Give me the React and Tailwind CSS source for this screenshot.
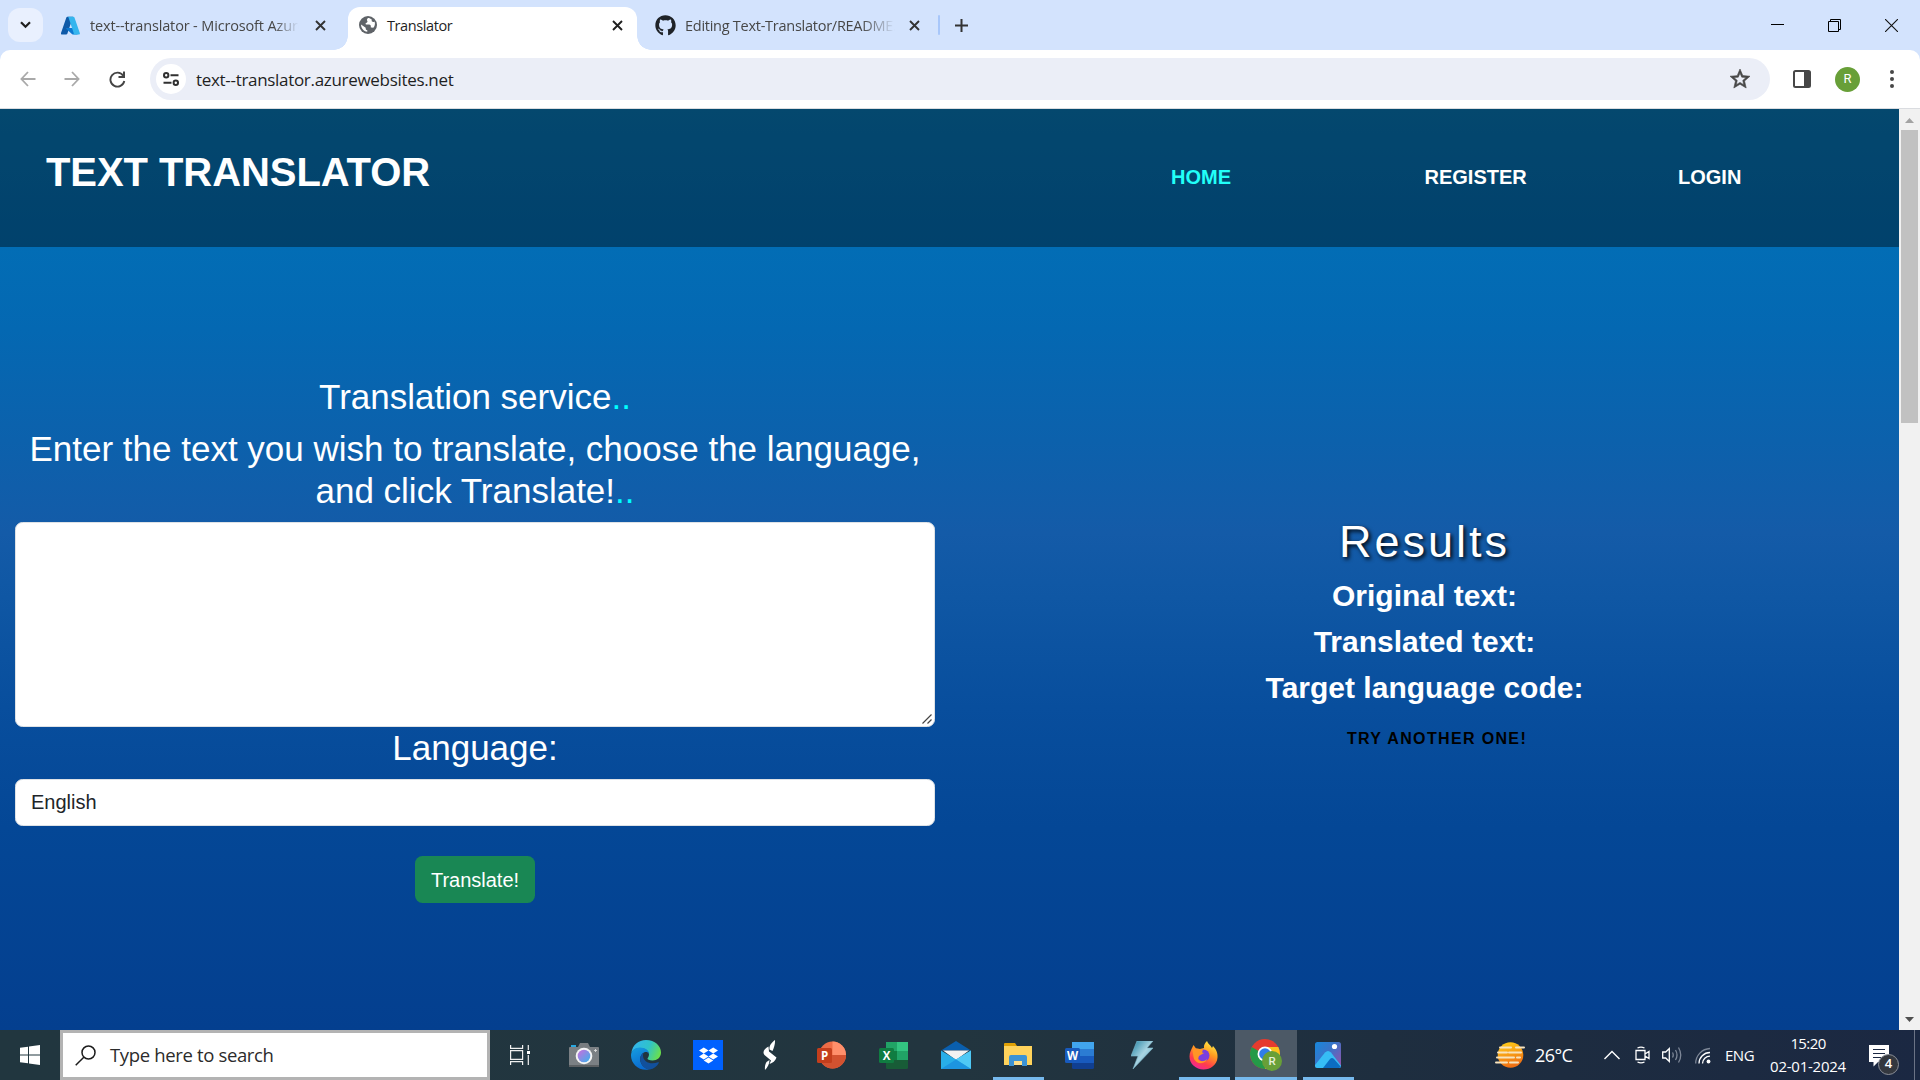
import React from "react";
import { FaGithub, FaDropbox } from "react-icons/fa";
import { MdStarOutline } from "react-icons/md";

const ui = "font-['Open_Sans','Noto_Sans',sans-serif]";

function CloseX({ color }) {
  return (
    <svg className="h-[11px] w-[11px] shrink-0" viewBox="0 0 11 11">
      <path d="M1 1l9 9M10 1l-9 9" stroke={color} strokeWidth="1.9" fill="none" />
    </svg>
  );
}

function AzureIcon() {
  return (
    <svg className="h-[19px] w-[19px] shrink-0" viewBox="0 0 96 96">
      <path fill="#0f5aa8" d="M33 4h28L32 90c-1 3-3 4-6 4H5c-4 0-7-4-5-8L27 8c1-3 3-4 6-4z" />
      <path fill="#0b78d1" d="M72 60H28c-2 0-3 2-2 4l29 27c1 1 2 3 4 3h25z" />
      <path fill="#35b5ee" d="M68 8c-1-3-3-4-6-4H32c3 0 5 1 6 4l26 78c2 4-1 8-5 8h31c4 0 7-4 5-8z" />
    </svg>
  );
}

function GlobeIcon() {
  return (
    <svg className="h-[18px] w-[18px] shrink-0" viewBox="0 0 18 18">
      <circle cx="9" cy="9" r="9" fill="#5f6368" />
      <path fill="#fff" d="M9 2c-1 1-1.400 1.900-.8 2.800.7 1 .2 1.700-1 2.200-.9.300-.8 1.200 0 1.500h3c1 0 1.600.8 1.600 1.700v1.300c.9 0 1.600-.2 2.200.5 1.800-1.700 2.500-4.300 1.500-6.600-.6.700-1.600.8-2.400.2-.6-.5-.5-1.400-.2-1.900C11.600 2.600 10.400 2 9 2zM2 8.500c0 3.500 2.600 6.800 6.300 7.300v-1.600c-1-.1-1.600-.8-1.600-1.700v-.8z" />
    </svg>
  );
}

function TabStrip() {
  return (
    <div className={`flex h-[50px] w-full items-center bg-[#d3e3fd] text-[14.5px] tracking-[-0.4px] ${ui}`}>
      <button className="ml-2 flex h-[34px] w-[35px] items-center justify-center rounded-[12px] bg-[#e9f0fe]">
        <svg className="h-[8px] w-[11px]" viewBox="0 0 11 8">
          <path d="M1 1.200l4.500 4.600L10 1.200" fill="none" stroke="#1f1f1f" strokeWidth="2.200" />
        </svg>
      </button>
      <div className="ml-[18px] flex w-[265px] items-center">
        <AzureIcon />
        <span className="ml-[10px] w-[209px] overflow-hidden whitespace-nowrap pt-px tracking-[-0.150px] text-[#474747] [mask-image:linear-gradient(to_right,black_88%,transparent)]">
          text--translator - Microsoft Azure
        </span>
        <span className="ml-[16px] flex"><CloseX color="#333" /></span>
      </div>
      <div className="relative ml-[22px] mt-[7px] flex h-[43px] w-[289px] items-center self-start rounded-t-[12px] bg-white pl-[11px] pb-[7px]">
        <div className="absolute -left-[14px] bottom-0 h-[14px] w-[14px] bg-[radial-gradient(circle_at_0_0,transparent_13.500px,white_14px)]" />
        <div className="absolute -right-[14px] bottom-0 h-[14px] w-[14px] bg-[radial-gradient(circle_at_100%_0,transparent_13.500px,white_14px)]" />
        <GlobeIcon />
        <span className="ml-[10px] pt-px text-[#1f1f1f]">Translator</span>
        <span className="ml-auto mr-[14px]"><CloseX color="#1f1f1f" /></span>
      </div>
      <div className="ml-[18px] flex items-center">
        <FaGithub className="h-[21px] w-[21px] text-[#1f2328]" />
        <span className="ml-[9px] w-[210px] overflow-hidden whitespace-nowrap pt-px tracking-[-0.260px] text-[#474747] [mask-image:linear-gradient(to_right,black_84%,transparent)]">
          Editing Text-Translator/README.md
        </span>
        <span className="ml-[14px]"><CloseX color="#333" /></span>
      </div>
      <div className="ml-[18px] h-[20px] w-[2px] rounded bg-[#a8c7fa]" />
      <svg className="ml-[15px] h-[13px] w-[13px]" viewBox="0 0 13 13">
        <path d="M6.500 0v13M0 6.500h13" stroke="#333" strokeWidth="2" />
      </svg>
      <div className="ml-auto mr-[22px] flex items-center gap-[44px]">
        <svg className="h-[13px] w-[13px]" viewBox="0 0 13 13"><path d="M0 5.500h13" stroke="#000" strokeWidth="1" /></svg>
        <svg className="h-[13px] w-[13px]" viewBox="0 0 13 13">
          <path d="M.5 2.500h10v10H.5zM2.500 2.500v-2h10v10h-2" stroke="#000" fill="none" />
        </svg>
        <svg className="h-[13px] w-[13px]" viewBox="0 0 13 13"><path d="M0 0l13 13M13 0L0 13" stroke="#111" strokeWidth="1.100" /></svg>
      </div>
    </div>
  );
}

function Toolbar() {
  return (
    <div className="bg-[#d3e3fd]">
      <div className={`flex h-[59px] w-full items-center rounded-t-[10px] border-b border-[#dadce0] bg-white ${ui}`}>
        <svg className="ml-[20px] h-[16px] w-[16px]" viewBox="0 0 16 16">
          <path d="M15.500 8H2M8 1L1.400 8 8 15" fill="none" stroke="#a9a9a9" strokeWidth="1.800" />
        </svg>
        <svg className="ml-[28px] h-[16px] w-[16px]" viewBox="0 0 16 16">
          <path d="M.5 8H14M8 1l6.600 7L8 15" fill="none" stroke="#a9a9a9" strokeWidth="1.800" />
        </svg>
        <svg className="ml-[29px] h-[17px] w-[17px]" viewBox="0 0 17 17">
          <path d="M14.200 4.600A7 7 0 1 0 15.300 10" fill="none" stroke="#444" strokeWidth="1.900" />
          <path d="M16 .5V7H9.500V5H14V.5z" fill="#444" />
        </svg>
        <div className="ml-[24px] flex h-[42px] w-[1620px] items-center rounded-full bg-[#ebeef7]">
          <div className="ml-[6px] flex h-[30px] w-[30px] items-center justify-center rounded-full bg-white">
            <svg className="h-[14px] w-[16px]" viewBox="0 0 16 14">
              <g fill="none" stroke="#303030" strokeWidth="2">
                <circle cx="3.200" cy="3.200" r="2.200" />
                <path d="M7.500 3.200H15.500M.5 10.800H8.500" />
                <circle cx="12.800" cy="10.800" r="2.200" />
              </g>
            </svg>
          </div>
          <span className="ml-[10px] whitespace-nowrap pt-[2px] text-[17px] tracking-[-0.310px] text-[#1f1f1f]">text--translator.azurewebsites.net</span>
          <MdStarOutline className="ml-auto mr-[18px] h-[24px] w-[24px] stroke-[#474747] stroke-[0.600] text-[#474747]" />
        </div>
        <svg className="ml-[23px] h-[18px] w-[18px]" viewBox="0 0 18 18">
          <rect x="1" y="1" width="16" height="16" rx="1.500" fill="none" stroke="#474747" strokeWidth="2" />
          <path d="M11 1h6v16h-6z" fill="#474747" />
        </svg>
        <div className="ml-[24px] flex h-[25px] w-[25px] items-center justify-center rounded-full bg-[#689f38] font-[Roboto,sans-serif] text-[13px] text-white">R</div>
        <svg className="ml-[30px] h-[18px] w-[4px]" viewBox="0 0 4 18" fill="#474747">
          <circle cx="2" cy="2" r="2" /><circle cx="2" cy="9" r="2" /><circle cx="2" cy="16" r="2" />
        </svg>
      </div>
    </div>
  );
}

function SiteHeader() {
  return (
    <header className="flex h-[138px] items-start bg-black/40 font-bold">
      <h1 className="ml-[46px] mt-[39px] whitespace-nowrap text-[40px] leading-[48px] tracking-[-0.070px] text-white">TEXT TRANSLATOR</h1>
      <nav className="ml-auto mt-[53px] flex text-[20px] leading-[30px] text-white">
        <a className="w-[253.500px] text-[#22fff8]">HOME</a>
        <a className="w-[253.500px]">REGISTER</a>
        <a className="w-[221px]">LOGIN</a>
      </nav>
    </header>
  );
}

function TranslatorPage() {
  return (
    <div className="flex h-[921px] w-[1899px] flex-col bg-[linear-gradient(to_bottom,#0778b8_0%,#026db5_15%,#0468b2_24%,#0c61ac_36%,#145ba8_46%,#0f57a4_53%,#084e9d_65%,#044796_78%,#043f8f_100%)] font-['Liberation_Sans',Arial,sans-serif]">
      <SiteHeader />
      <main className="flex flex-1">
        <section className="flex w-[950px] flex-col items-center px-[15px] pt-[129px] text-white">
          <h2 className="mb-[10px] text-[35px] leading-[42px]">Translation service<span className="text-[#00ffff]">..</span></h2>
          <h2 className="mb-[10px] text-center text-[35px] leading-[42px]">
            Enter the text you wish to translate, choose the language,<br />and click Translate!<span className="text-[#00ffff]">..</span>
          </h2>
          <div className="flex h-[205px] w-[920px] items-end justify-end rounded-[7.500px] border border-[#dee2e6] bg-white p-[2px]">
            <svg className="h-[10px] w-[10px]" viewBox="0 0 10 10"><path d="M.5 9.500l9-9M5.500 9.500l4-4" stroke="#444" strokeWidth="1.200" /></svg>
          </div>
          <h2 className="mb-[10px] text-[35px] leading-[42px]">Language:</h2>
          <div className="flex h-[47px] w-[920px] items-center rounded-[7.500px] border border-[#dee2e6] bg-white pb-[2px] pl-[15px] text-[20px] leading-[30px] text-[#212529]">English</div>
          <button className="mt-[30px] h-[47px] w-[120px] whitespace-nowrap rounded-[7.500px] bg-[#198754] text-[20px] leading-[30px]">Translate!</button>
        </section>
        <section className="flex flex-1 flex-col items-center pt-[268px] text-white">
          <h2 className="mb-[9px] text-[45px] leading-[54px] tracking-[3px] [text-shadow:2px_2px_4px_#000]">Results</h2>
          <h3 className="mb-[10px] text-[30px] font-bold leading-[36px]">Original text:</h3>
          <h3 className="mb-[10px] text-[30px] font-bold leading-[36px]">Translated text:</h3>
          <h3 className="text-[30px] font-bold leading-[36px]">Target language code:</h3>
          <a className="mt-[21px] pl-[25px] text-[16px] font-bold leading-[24px] tracking-[1.350px] text-black">TRY ANOTHER ONE!</a>
        </section>
      </main>
    </div>
  );
}

function Scrollbar() {
  return (
    <div className="flex w-[21px] flex-col items-center bg-[#f1f1f1]">
      <svg className="mt-[9px] h-[5px] w-[9px]" viewBox="0 0 9 5"><path d="M0 5L4.500 0 9 5z" fill="#a3a3a3" /></svg>
      <div className="mt-[7px] h-[293px] w-[17px] bg-[#c1c1c1]" />
      <svg className="mb-[8px] mt-auto h-[5px] w-[9px]" viewBox="0 0 9 5"><path d="M0 0L4.500 5 9 0z" fill="#505050" /></svg>
    </div>
  );
}

const CameraIcon = () => (
  <svg className="h-[30px] w-[30px]" viewBox="0 0 30 30">
    <defs><linearGradient id="lens" x1="0" y1="0" x2="1" y2="1"><stop offset=".2" stopColor="#b07ae0" /><stop offset="1" stopColor="#35b4ee" /></linearGradient></defs>
    <path d="M2 5h5v3H2z" fill="#28a8e0" />
    <path d="M9 7l2-4h8l2 4z" fill="#777c80" />
    <rect y="7" width="30" height="20" rx="1" fill="#7b8084" />
    <path d="M0 25h30v2H0z" fill="#5c6063" />
    <circle cx="15" cy="16" r="8.300" fill="#f4f4f4" />
    <circle cx="15" cy="16" r="6.300" fill="url(#lens)" />
    <path d="M26.500 9v3M25 10.500h3" stroke="#ddd" strokeWidth=".9" />
  </svg>
);

const EdgeIcon = () => (
  <svg className="h-[30px] w-[30px]" viewBox="0 0 30 30">
    <defs>
      <linearGradient id="edgeTop" x1="0" y1=".3" x2="1" y2=".6"><stop stopColor="#33b4ef" /><stop offset=".55" stopColor="#2fc3c9" /><stop offset="1" stopColor="#6be04a" /></linearGradient>
      <linearGradient id="edgeLeft" x1="0" y1="0" x2=".4" y2="1"><stop stopColor="#169fe0" /><stop offset="1" stopColor="#0a6ad0" /></linearGradient>
    </defs>
    <path d="M.3 13C1.500 5 7.500 0 15 0c9 0 15 6 15 12.500 0 5-4 8-8.500 8-3.500 0-5-1.200-5-2 0-.6 1.500-1.600 1.500-4 0-4-4.500-6.500-9-6.500-4 0-7.500 2-8.700 5z" fill="url(#edgeTop)" />
    <path d="M0 15.500C0 10.500 4 7.500 9 7.500c4.500 0 9 2.800 9 6.500-1-2-3-2.500-5-1.500-3 1.500-4.500 5-3.500 9 1 4 5 7.500 9 8C8 31.500 0 24 0 15.500z" fill="url(#edgeLeft)" />
    <path d="M12.500 12.700C9 15 8.500 19 10 23c1.500 4 5 6.500 8.800 6.500 4-.7 7-3 9-6.500.4-.7-.2-1-.8-.8-7 3-15-.2-15-6.700 0-1 .2-2 .5-2.800z" fill="#12509c" />
  </svg>
);

const DropboxIcon = () => (
  <div className="flex h-[30px] w-[30px] items-center justify-center bg-[#0061ff]">
    <FaDropbox className="h-[19px] w-[19px] text-white" />
  </div>
);

const SwiftIcon = () => (
  <svg className="h-[30px] w-[14px]" viewBox="0 0 14 30">
    <path fill="#fff" d="M12 0C9 2.500 6 5 6.500 9.500L9.500 11C11 7.500 12.300 4 12 0zM5.500 6.500C1.500 8.500-1 12 1.500 15L8 20.500 6.500 24c3-1 6-3 7-6.500L6 11.500zM2 30c-.3-3 0-5.500 1.500-8L6.500 20c0 4-2 7.500-4.500 10z" />
  </svg>
);

const OfficeTile = ({ fill, letter }) => (
  <g>
    <rect x="0" y="7" width="15" height="15" rx="1.500" fill={fill} />
    <text x="7.500" y="18.500" textAnchor="middle" fill="#fff" fontSize="11.500" fontWeight="700" fontFamily="Open Sans, sans-serif">{letter}</text>
  </g>
);

const PowerPointIcon = () => (
  <svg className="mr-[2px] h-[28px] w-[29px]" viewBox="0 0 29 28">
    <circle cx="15.500" cy="14" r="13.500" fill="#ed6c47" />
    <path d="M15.500.5A13.500 13.500 0 0 1 29 14H15.500z" fill="#ff8f6b" />
    <path d="M2 14h27a13.500 13.500 0 0 1-27 0z" fill="#d35230" />
    <OfficeTile fill="#c43e1c" letter="P" />
  </svg>
);

const ExcelIcon = () => (
  <svg className="mr-[2px] h-[28px] w-[29px]" viewBox="0 0 29 28">
    <rect x="7" y="1" width="22" height="27" rx="1.500" fill="#185c37" />
    <path d="M7 1h11v9H7z" fill="#21a366" /><path d="M18 1h11v9H18z" fill="#33c481" />
    <path d="M7 10h11v9H7z" fill="#107c41" /><path d="M18 10h11v9H18z" fill="#21a366" />
    <OfficeTile fill="#107c41" letter="X" />
  </svg>
);

const WordIcon = () => (
  <svg className="mr-[2px] h-[28px] w-[29px]" viewBox="0 0 29 28">
    <rect x="7" y="1" width="22" height="27" rx="1.500" fill="#103f91" />
    <path d="M7 1h22v7H7z" fill="#41a5ee" /><path d="M7 8h22v7H7z" fill="#2b7cd3" /><path d="M7 15h22v7H7z" fill="#185abd" />
    <OfficeTile fill="#185abd" letter="W" />
  </svg>
);

const MailIcon = () => (
  <svg className="h-[28px] w-[30px]" viewBox="0 0 30 28">
    <path d="M0 9.500L15 0l15 9.500z" fill="#0a5fae" />
    <path d="M2 9.500h26L15 19z" fill="#f2f2f2" />
    <path d="M0 9.500l15 9 15-9V28H0z" fill="#28aee8" />
    <path d="M30 9.500L15 18.500 30 28z" fill="#4fc9f5" />
    <path d="M0 28l15-9.500L30 28z" fill="#1d95e0" />
  </svg>
);

const FolderIcon = () => (
  <svg className="h-[26px] w-[28px]" viewBox="0 0 28 26">
    <path d="M0 1.500Q0 1 1 1h10l2 3v6H0z" fill="#e0a106" />
    <path d="M0 4h28v19H0z" fill="#ffd35c" />
    <path d="M5 24V15q0-2 2-2h14q2 0 2 2v9h-5v-5h-8v5z" fill="#3c93d4" />
    <path d="M10 19h8v4h-8z" fill="#ffe08a" />
  </svg>
);

const BoltIcon = () => (
  <svg className="h-[28px] w-[23px]" viewBox="0 0 23 28">
    <defs><linearGradient id="bolt" x1="0" y1="0" x2="1" y2="1"><stop stopColor="#1d7fa0" /><stop offset=".5" stopColor="#a9d4e2" /><stop offset="1" stopColor="#4a9fbd" /></linearGradient></defs>
    <path d="M6 0h16l-6 7h6L2 28l5-13H0z" fill="url(#bolt)" stroke="#7fb9cc" strokeWidth=".6" />
  </svg>
);

const FirefoxIcon = () => (
  <svg className="mr-[2px] h-[29px] w-[29px]" viewBox="0 0 29 29">
    <defs><linearGradient id="fox" x1=".8" y1="0" x2=".3" y2="1"><stop stopColor="#fff24a" /><stop offset=".4" stopColor="#ff9a1f" /><stop offset=".75" stopColor="#ff3c4c" /><stop offset="1" stopColor="#f0259a" /></linearGradient></defs>
    <path d="M4.500 4L7 7.500 11 8l4-1C14.500 4 16 2 18 0c1 3 3.500 4 5 7l1-2c3 3 5 7 4.500 11.500C28 24 21.500 28.500 14.500 28.500 7 28.500.5 23 .5 15.500.5 11 2.500 8.500 3 7z" fill="url(#fox)" />
    <circle cx="14.500" cy="14.500" r="6" fill="#7a3fe0" />
    <path d="M3 7l4 .5 7 1-1 3 2 .5-5 3-1 3c2 3 6 3 9 0-1 5-10 6-13 0C4 15 4 11 3 7z" fill="#ff9526" />
  </svg>
);

const ChromeIcon = () => (
  <svg className="h-[32px] w-[32px]" viewBox="0 0 32 32">
    <circle cx="15" cy="15" r="15" fill="#e63b2e" />
    <path d="M15 8h13.300A15 15 0 0 1 15 30z" fill="#fcc31e" />
    <path d="M1.700 8A15 15 0 0 0 15 30l6-11z" fill="#249a48" />
    <circle cx="15" cy="15" r="7.500" fill="#fff" />
    <circle cx="15" cy="15" r="5.800" fill="#2f7de9" />
    <circle cx="22" cy="22" r="10" fill="#689f38" />
    <text x="22" y="26.200" textAnchor="middle" fontSize="11.500" fill="#e6efd9" fontFamily="Roboto, sans-serif" fontWeight="500">R</text>
  </svg>
);

const PhotosIcon = () => (
  <svg className="h-[26px] w-[26px]" viewBox="0 0 26 26">
    <defs>
      <linearGradient id="sky" x1="0" y1="0" x2="1" y2=".8"><stop stopColor="#1688dd" /><stop offset=".5" stopColor="#3b73c8" /><stop offset="1" stopColor="#8b56ae" /></linearGradient>
      <clipPath id="photo"><rect width="26" height="26" rx="2.500" /></clipPath>
    </defs>
    <g clipPath="url(#photo)">
      <path d="M0 0h26v26H0z" fill="url(#sky)" />
      <path d="M0 23l10-12.500q3-3 6 0L28 26H0z" fill="#36bdf5" />
      <path d="M8 26l7-9q2-2 4 0l8 9z" fill="#0b6dc2" />
    </g>
    <circle cx="19.500" cy="4.500" r="2.600" fill="#fff" />
  </svg>
);

const apps = [
  { Icon: CameraIcon }, { Icon: EdgeIcon }, { Icon: DropboxIcon }, { Icon: SwiftIcon },
  { Icon: PowerPointIcon }, { Icon: ExcelIcon }, { Icon: MailIcon }, { Icon: FolderIcon, open: true },
  { Icon: WordIcon }, { Icon: BoltIcon }, { Icon: FirefoxIcon, open: true },
  { Icon: ChromeIcon, active: true }, { Icon: PhotosIcon, open: true },
];

function Taskbar() {
  return (
    <footer className={`flex h-[50px] w-full items-center bg-[linear-gradient(to_right,#21363f_0%,#22353f_50%,#1e2e3f_72%,#1b2842_100%)] text-white ${ui}`}>
      <div className="flex w-[60px] justify-center">
        <svg className="h-[20px] w-[20px]" viewBox="0 0 20 20" fill="#fff">
          <path d="M0 2.800l8-1.100v7.800H0zM9 1.500L20 0v9.500H9zM0 10.500h8v7.800l-8-1.100zM9 10.500h11V20L9 18.500z" />
        </svg>
      </div>
      <div className="flex h-[50px] w-[430px] items-center border-[3px] border-[#b3b3b3] bg-white pl-[12px]">
        <svg className="h-[21px] w-[21px]" viewBox="0 0 21 21">
          <circle cx="13.500" cy="7.500" r="6.500" fill="none" stroke="#1c1c1c" strokeWidth="1.500" />
          <path d="M8.800 12.200L.7 20.300" stroke="#1c1c1c" strokeWidth="1.500" />
        </svg>
        <span className="ml-[14px] whitespace-nowrap text-[18.500px] tracking-[-0.350px] text-[#2b2b2b]">Type here to search</span>
      </div>
      <div className="flex w-[63px] pl-[20px]">
        <svg className="h-[20px] w-[20px]" viewBox="0 0 20 20" fill="none" stroke="#f0f0f0" strokeWidth="1.200">
          <path d="M.6 0v3.400h12V0M.6 5.600h12v8.800H.6zM.6 20v-3.400h12V20M18.300 0v5M18.300 10v10" />
          <path d="M17 6h3v3h-3z" fill="#fff" stroke="none" />
        </svg>
      </div>
      {apps.map(({ Icon, open, active }, i) => (
        <div key={i} className={`flex h-[50px] w-[62px] flex-col items-center ${active ? "bg-[#4c5966]" : ""}`}>
          <div className="flex h-[47px] items-center pt-[3px]"><Icon /></div>
          {open && <div className="h-[3px] w-[51px] bg-[#76b9ed]" />}
          {active && <div className="h-[3px] w-full bg-[#76b9ed]" />}
        </div>
      ))}
      <div className="ml-[136px] flex items-center">
        <svg className="h-[26px] w-[30px]" viewBox="0 0 30 26">
          <defs><linearGradient id="sun" x1="0" y1="0" x2=".3" y2="1"><stop stopColor="#ffd21a" /><stop offset="1" stopColor="#f07012" /></linearGradient></defs>
          <circle cx="15.500" cy="13" r="12.800" fill="url(#sun)" />
          <g stroke="#f7e3bd" strokeWidth="2" strokeLinecap="round"><path d="M5 5.500h11M21 5.500h8M3 10.500h9M14 10.500h12M2 15.500h17M22 15.500h3M1 20.500h11M15 20.500h8" /></g>
        </svg>
        <span className="ml-[10px] w-[69px] text-[18px] tracking-[-0.600px]">26°C</span>
      </div>
      <svg className="h-[10px] w-[16px]" viewBox="0 0 16 10"><path d="M.5 9L8 1.500 15.500 9" fill="none" stroke="#fff" strokeWidth="1.400" /></svg>
      <svg className="ml-[15px] h-[18px] w-[15px]" viewBox="0 0 15 18" fill="none" stroke="#fff" strokeWidth="1.300">
        <path d="M1 4.500h9v9H1zM10 8l4-2.500v7L10 10M2.500 2Q6 .2 9.500 2M2.500 16Q6 17.800 9.500 16" />
      </svg>
      <svg className="ml-[12px] h-[18px] w-[20px]" viewBox="0 0 20 18" fill="none" stroke="#fff" strokeWidth="1.300">
        <path d="M.7 6h3L7.300 2.500v13L3.700 12h-3z" />
        <path d="M10.500 6.500q1.500 2.500 0 5M13.500 4q3 5 0 10M16.500 1.500q4.500 7.500 0 15" stroke="#7d8797" />
      </svg>
      <svg className="ml-[13px] h-[17px] w-[16px]" viewBox="0 0 16 17" fill="none" stroke="#fff" strokeWidth="1.300">
        <path d="M.7 16.500A15 15 0 0 1 15 1.500" stroke="#7d8797" />
        <path d="M4 16.500A11 11 0 0 1 15 5.500M7.500 16.500A7.500 7.500 0 0 1 15 9.200" />
        <circle cx="13.500" cy="14.500" r="1.900" fill="#fff" stroke="none" />
      </svg>
      <span className="ml-[14px] w-[44px] text-[15px] tracking-[-0.500px]">ENG</span>
      <div className="flex w-[78px] flex-col items-center whitespace-nowrap text-[15px] leading-[23px] tracking-[-0.250px]">
        <span className="tracking-[-0.600px]">15:20</span>
        <span>02-01-2024</span>
      </div>
      <div className="relative ml-[22px] mt-[9px] h-[30px] w-[30px]">
        <svg className="h-[22px] w-[20px]" viewBox="0 0 20 22">
          <path d="M0 0h20v17h-11l-4.500 4.500V17H0z" fill="#fff" />
          <path d="M4 4.500h12M4 8.500h12M4 12.500h8" stroke="#1b2842" strokeWidth="1.200" />
        </svg>
        <div className="absolute left-[9px] top-[9px] flex h-[21px] w-[21px] items-center justify-center rounded-full border border-[#8b8f98] bg-[#34383f] text-[13px] font-semibold">4</div>
      </div>
      <div className="ml-auto mr-[5px] h-[50px] w-px bg-[#6b7385]" />
    </footer>
  );
}

export default function App() {
  return (
    <div className="flex h-[1080px] w-[1920px] flex-col overflow-hidden bg-white">
      <TabStrip />
      <Toolbar />
      <div className="flex h-[921px]">
        <TranslatorPage />
        <Scrollbar />
      </div>
      <Taskbar />
    </div>
  );
}
